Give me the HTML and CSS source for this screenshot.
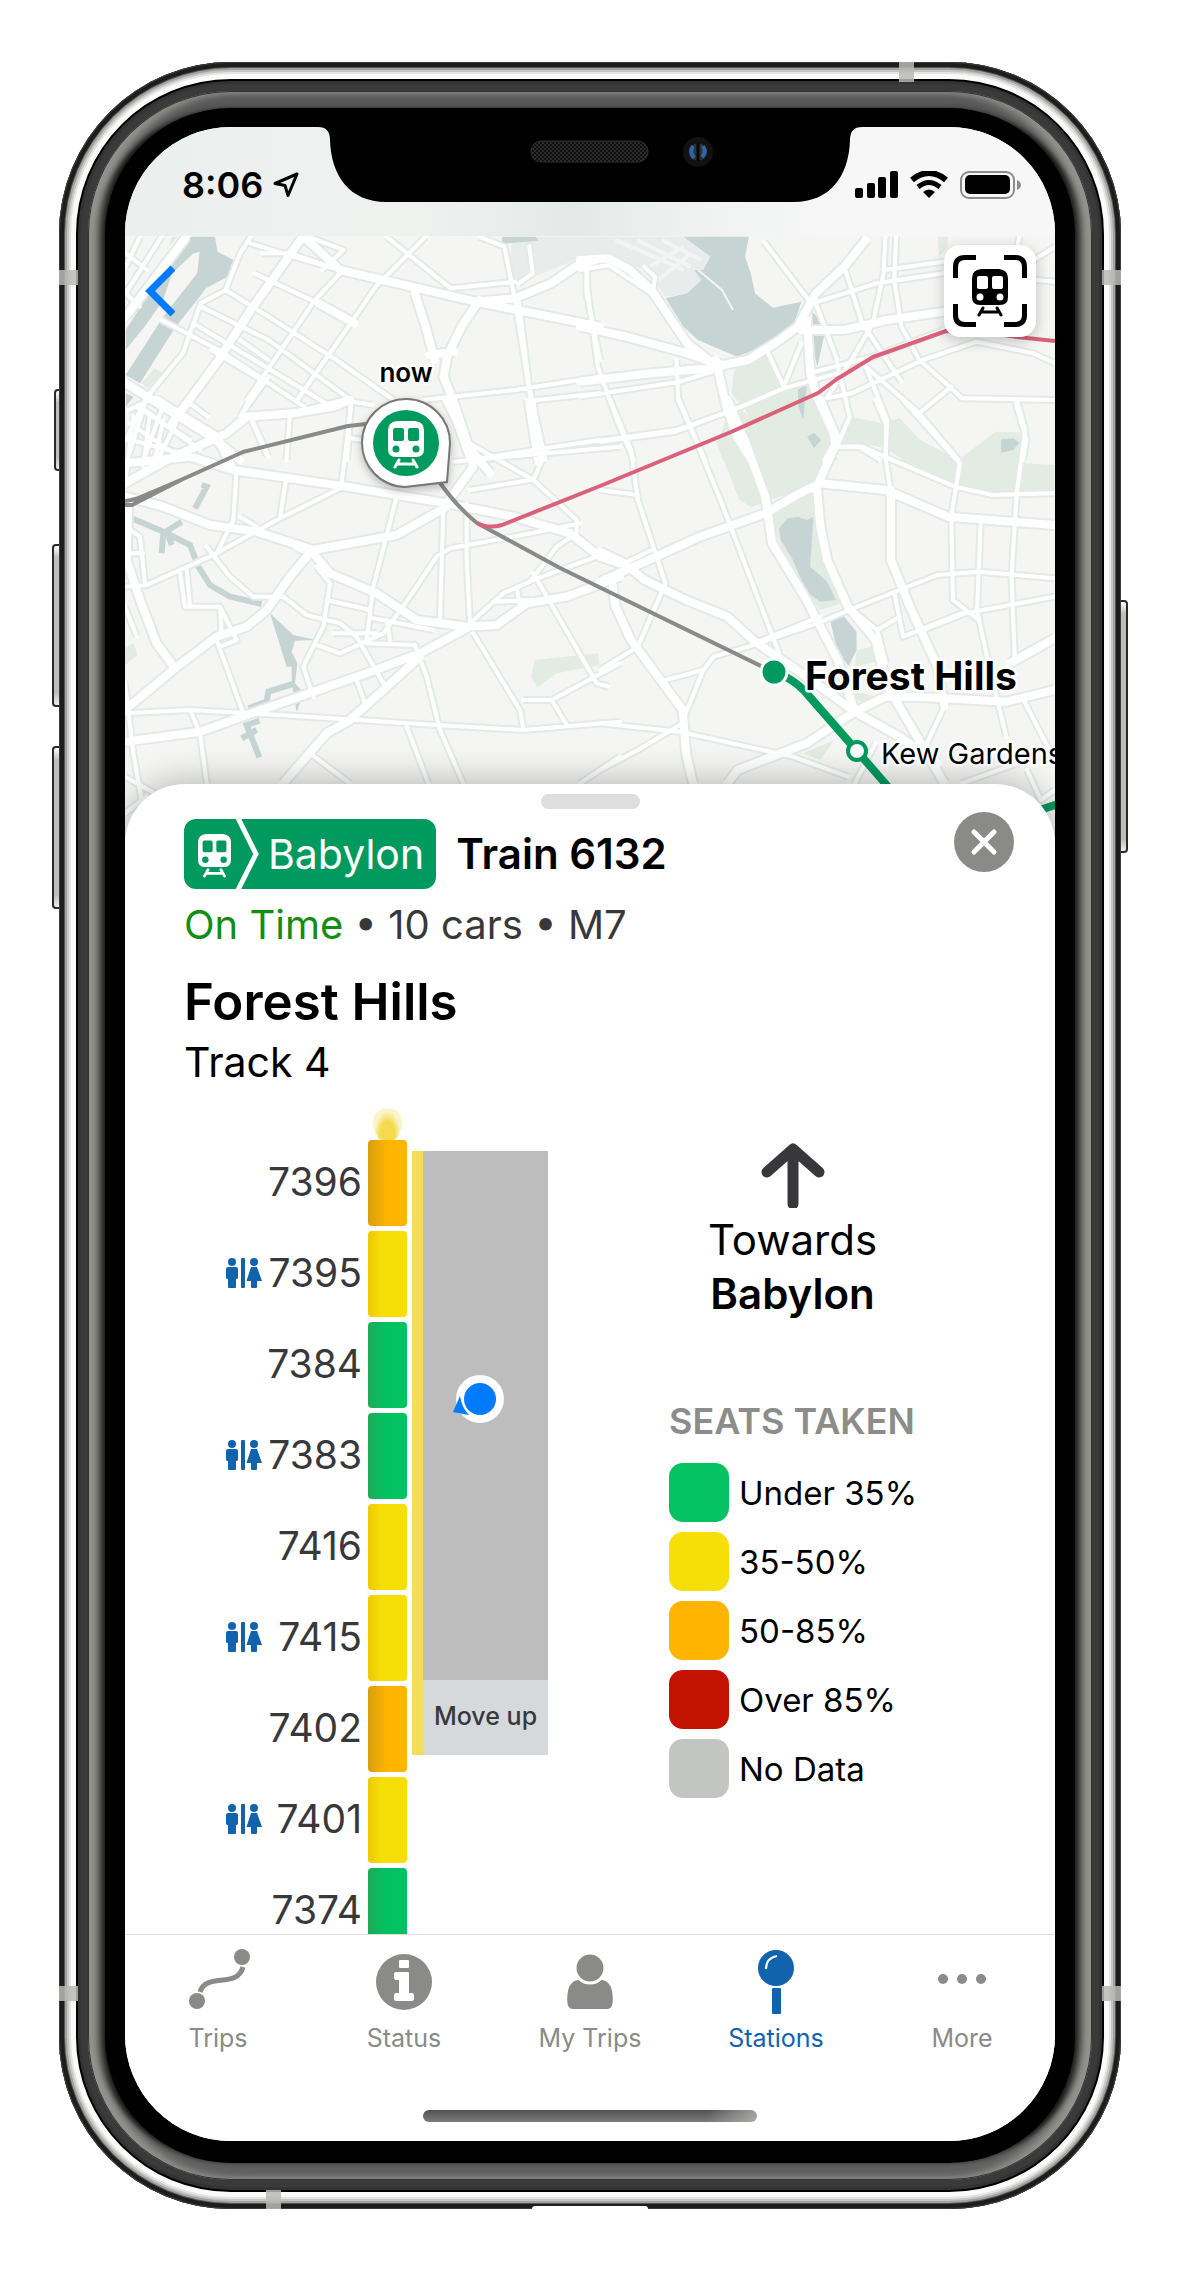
FILE: index.html
```html
<!DOCTYPE html>
<html lang="en">
<head>
<meta charset="utf-8">
<meta name="viewport" content="width=device-width, initial-scale=1">
<title>Train 6132 to Babylon</title>
<link rel="stylesheet" href="styles.css">
</head>
<body>
<svg class="sprite" aria-hidden="true">
  <symbol id="train" viewBox="0 0 36 48">
    <path fill="currentColor" fill-rule="evenodd" d="M9 0H27Q36 1 36 9V28Q36 36 28 36H8Q0 36 0 28V9Q0 1 9 0ZM7 7Q5 7 5 9V18Q5 20 7 20H14Q16 20 16 18V9Q16 7 14 7ZM22 7Q20 7 20 9V18Q20 20 22 20H29Q31 20 31 18V9Q31 7 29 7ZM8 24.500A3.500 3.500 0 1 0 8 31.500A3.500 3.500 0 1 0 8 24.500ZM28 24.500A3.500 3.500 0 1 0 28 31.500A3.500 3.500 0 1 0 28 24.500Z"/>
    <path fill="none" stroke="currentColor" stroke-width="3" stroke-linecap="round" d="M11 39L7 46M25 39L29 46M10 43H26"/>
  </symbol>
  <symbol id="restroom" viewBox="0 0 36 30">
    <g fill="currentColor">
      <circle cx="6" cy="4" r="4"/>
      <path d="M2 9H10Q12 9 12 11V20Q12 21 10 21V29Q10 30 9 30H3Q2 30 2 29V21Q0 21 0 20V11Q0 9 2 9Z"/>
      <rect x="15" y="0" width="4" height="30" rx="1"/>
      <circle cx="28" cy="4" r="4"/>
      <path d="M25 9H31L36 23H31V29Q31 30 30 30H26Q25 30 25 29V23H20.500Z"/>
    </g>
  </symbol>
</svg>

<main class="stage">
<div class="phone">
  <span class="side-key side-key-mute"></span>
  <span class="side-key side-key-up"></span>
  <span class="side-key side-key-down"></span>
  <span class="side-key side-key-power"></span>
  <div class="case">
  <span class="band band-left"></span>
  <span class="band band-right"></span>
  <span class="band band-left band-low"></span>
  <span class="band band-right band-low"></span>
  <span class="band band-top"></span>
  <span class="band band-bottom"></span>
  <span class="chin"></span>
  <div class="rim">
  <div class="glass">
  <div class="screen">

    <header class="status">
      <div class="clock">
        <time>8:06</time>
        <svg width="26" height="26" viewBox="0 0 26 26" aria-hidden="true"><path d="M2 11.500L24 2L15 23.500L12 13.500Z" fill="none" stroke="#000" stroke-width="3" stroke-linejoin="round"/></svg>
      </div>
      <svg class="notch" viewBox="314 126 552 78" aria-hidden="true">
        <defs><pattern id="mesh" width="4" height="4" patternUnits="userSpaceOnUse"><rect width="4" height="4" fill="#101010"/><circle cx="1" cy="1" r="1" fill="#333"/><circle cx="3" cy="3" r="1" fill="#333"/></pattern></defs>
        <path d="M314 126V127H318Q330 127 330 140C331 176 350 202 386 202H794C830 202 849 176 850 140Q850 127 862 127H866V126Z"/>
        <rect x="531" y="141" width="117" height="21" rx="10" fill="url(#mesh)" stroke="#2c2c2c"/>
        <circle cx="698" cy="152" r="15" fill="#121212"/>
        <circle cx="698" cy="152" r="9" fill="#2c3138"/>
        <path d="M693 146Q689 152 694 158M703 146Q707 152 702 157" fill="none" stroke="#2a66a8" stroke-width="4"/>
        <path d="M698 143V161" stroke="#050505" stroke-width="3"/>
      </svg>
      <svg class="signals" width="167" height="28" viewBox="854 171 167 28" role="img" aria-label="Signal, Wi-Fi and battery">
        <rect x="854" y="188" width="8" height="10" rx="2"/><rect x="866" y="183" width="8" height="15" rx="2"/><rect x="877" y="177" width="8" height="21" rx="2"/><rect x="889" y="171" width="8" height="27" rx="2"/>
        <path d="M911 180Q928 166 945 180" fill="none" stroke="#000" stroke-width="6"/>
        <path d="M917 187Q928 178 939 187" fill="none" stroke="#000" stroke-width="5"/>
        <path d="M922 192Q928 187 934 192L928 198Z"/>
        <rect x="960" y="172" width="53" height="26" rx="8" fill="none" stroke="#8c8c8c" stroke-width="2"/>
        <rect x="964" y="175" width="45" height="19" rx="5"/>
        <path d="M1016 180Q1020 182 1020 185Q1020 188 1016 190Z" fill="#8c8c8c"/>
      </svg>
    </header>

    <section class="map" aria-label="Map">
      <svg class="map-art" viewBox="125 236 930 614" preserveAspectRatio="xMidYMin slice">
        <defs>
          <g id="streets">
            <g transform="translate(40 40) scale(.35714 .33333)">
              <path d="M590 590L560 640L520 750L450 790L400 940L300 1070L240 1200M620 640H700L840 690M590 610L740 660L840 690M840 700L770 780L580 1080M940 740L870 850L720 1080M340 840L500 930L740 1100M430 850L600 960L800 1090M450 800L640 900L870 1080M600 700L780 790M640 830L830 960L990 1080M520 750L640 830M750 590L850 630L790 690M970 590L1150 745L1330 725M940 740L1080 590M1230 590L1300 620L1330 780L1400 1260M1340 780L1370 1040L1415 1260M1370 620L1380 700L1340 730M1530 680V760L1568 960M560 1130L700 1120L850 1080L930 1095M1070 1080L1330 1050L1568 1010M1390 1080L1568 1060M1200 1260L1568 1200M700 1120L690 1260M870 1090L860 1260M590 1130L640 1250M240 640L300 690M240 760L280 800M280 590L240 680M340 590L240 760M420 1090L470 1130M560 900L640 960M480 930L620 1020L560 1130M300 1070L250 1240M340 1110L290 1260M380 1150L330 1260M270 1100L420 1200M250 1150L390 1250M640 1010L560 1130"/>
            </g>
            <g transform="translate(580 40) scale(.35714 .33333)">
              <path d="M20 680V740L50 980L100 1130L150 1260M270 960L275 1080L350 1260M0 690L80 675L200 760L300 920M515 605L640 780M650 790L830 730L1018 700M855 590L850 700L820 850L760 960L690 1075M885 590L880 720L900 860L950 960L1040 1045L1070 1075L1331 1080M850 690L1018 665M740 680L790 850L900 1025M660 790L720 960M690 1075L760 1060L960 960L1110 905L1270 940L1331 970M640 1000L820 950L1018 870M525 935L570 1040L620 910M0 1070L280 1025L400 985M0 1210L270 1170L430 1110L570 1045L720 1000M800 980L860 1140L855 1260M800 980L950 1120L1060 1260M950 1120L1040 1040M720 970L755 1130L720 1220L780 1220L840 1260M1220 1090L1250 1200L1240 1260M1270 660L1331 620M1230 590L1225 620M1275 720L1331 725M180 680L210 710L205 750"/>
            </g>
            <g transform="translate(100 400) scale(.33333)">
              <path d="M100 50L75 250M150 40L130 200M190 60L160 200M75 115L280 170M120 20L300 150M85 30L150 0M410 210L400 360L350 460M75 560L140 555L340 465L540 355L720 265M420 350L470 380M890 290L820 560L800 720M540 350L560 230M320 440L390 530L460 590L550 590L620 645L720 670L770 710L850 850M240 520L255 620L360 620L410 720L360 740M260 510L270 620M360 620L365 700M350 720L430 940M75 380L120 410L135 550M90 460H130M75 620L110 710M75 850L100 1060L125 1200M75 1130L200 1200M75 940L270 930L540 945L1010 975L1270 990L1560 965M270 930L300 1000L320 1150M75 1240L140 1190M650 500L690 550L670 680L610 800L640 890M680 600L810 630M650 735L720 760L850 700L930 590L1010 470L1050 445L1240 410L1440 370M1030 320L1020 660M1100 310V480L1110 670M820 655L1000 690M800 730L945 735L980 830L1020 990L1090 1150M770 840L795 910M920 980L985 1150M630 1060L750 1150M1120 700L1260 930L1270 990M1110 670L1210 580L1290 545L1370 440L1430 400M1180 605L1290 600M1300 520L1490 850L1525 860M1270 900H1355L1560 790M1355 900L1400 975M1440 1150L1560 1070M755 0L725 250M750 115L790 120M1060 185L1560 140M1100 125L1300 240L1430 360V390M1300 240L1340 150M1110 270L1290 240M1280 0L1310 190M1300 0L1320 150M1530 0L1560 70M450 50L500 165M1490 470L1300 540M700 700H830M860 660L870 720M1250 560L1260 620"/>
            </g>
            <g transform="translate(600 400) scale(.34436 .33333)">
              <path d="M0 125L220 95L420 15M30 0L90 150L110 300L190 550L110 740L0 810M230 0L290 150L350 300L520 760M0 270L110 285M70 490L150 450M190 840L300 810L330 770L430 740L630 670L760 615L980 525L1100 515L1320 535M300 810L245 950M460 725L640 650M0 970L230 995L560 1070L720 1130M0 1110L110 1050L240 970M690 140H760L860 185L1030 260L1140 285L1320 280M800 0L830 70V180L845 280M880 0L1045 190L1020 350L1025 600L1100 660M1210 0L1235 90L1210 280L1195 530L1205 790M1105 375L1095 630L1130 800L1180 1010M940 690L1060 640L1320 590M855 580L880 710L1050 640M870 650L805 690L830 790M720 620L805 690M1000 920L940 1050M1230 900L1320 1080M1240 1110L1280 1200L1321 1170M1050 1150L1240 1080M740 1150L800 1030"/>
            </g>
          </g>
          <g id="avenues">
            <g transform="translate(40 40) scale(.35714 .33333)">
              <path d="M738 590L840 690L1060 745L1220 785L1330 775L1430 730L1500 680L1568 655M1220 785L1568 860M1230 780L1180 860L1140 950L1130 1010L1160 1090L1200 1220L1260 1300M1050 760L1080 860L1105 960M1090 945L1160 935M240 1030L330 1090L480 1190L560 1260M735 590L690 660L590 810L500 960L370 1150M410 590L240 830M780 790L880 850"/>
            </g>
            <g transform="translate(580 40) scale(.35714 .33333)">
              <path d="M0 660L80 655L140 690L200 750L250 830L300 910L360 960L400 975L470 960L560 900L610 860L660 760L740 680L800 600M0 860L130 890L300 940L380 970M0 1025L200 1000L370 985M380 960L410 1100L440 1190L480 1260M635 840L645 1000L660 1060L710 1180L715 1215L690 1260M620 870H740L860 840L1020 815"/>
            </g>
            <g transform="translate(100 400) scale(.33333)">
              <path d="M75 250L200 180L380 100L440 50L580 40L700 20L750 0M170 0L250 50L350 110L400 210L740 260L1040 310L1240 350L1410 400L1500 470L1560 490M75 290L190 320L330 375L470 395L640 450L890 405L1040 320M75 190L270 170L400 210M590 440L640 460L690 520L830 580L950 660L1100 680L1190 675L1280 610L1400 590L1560 530M620 470L570 530L500 630L440 680L350 710L225 805L75 930M85 300L80 480L120 600L170 730L225 805M75 1025L300 995L440 945L800 820L960 760L1100 685M960 770L750 960L680 1000L550 1150M1040 310L1120 200L1070 60L1040 0"/>
            </g>
            <g transform="translate(600 400) scale(.34436 .33333)">
              <path d="M0 455L70 490L130 540L250 600L370 650L450 725L600 830L740 935L870 1010L980 1090M0 545L120 490L290 410L480 340L580 280L640 250L830 270L1010 350L1320 375M370 0L420 120L480 290L500 430L600 600L690 780L740 935M640 0L690 120L630 260L640 380L660 480L720 620L800 720L830 850L960 1080L1000 1150M845 270V480L900 620L980 800L1000 920M740 935L830 890H920L1180 905L1320 870M740 935L600 1030L400 1110L370 1150M35 540L45 620L90 720L240 930L250 1060L270 1150M1190 790L1320 715"/>
            </g>
          </g>
        </defs>
        <rect x="125" y="236" width="930" height="614" fill="#f5f5f4"/>
        <g class="park">
          <g transform="translate(40 40) scale(.35714 .33333)"><path d="M320 985L345 1000L300 1045L285 1030ZM370 590H385L360 620Z"/></g>
          <g transform="translate(580 40) scale(.35714 .33333)"><path d="M430 1000L470 930L525 950L560 1040L640 1020L670 1060L720 1190V1260H400L380 1200L440 1190L470 1120L425 1060ZM1002 590H1030V620L1005 650Z"/></g>
          <g transform="translate(600 400) scale(.34436 .33333)"><path d="M385 10L430 45L640 0L700 130L630 260L520 290L440 322L405 300L340 130ZM490 340L620 270L650 480L700 610L640 630L560 520L510 400ZM690 130L730 50L820 70L870 55L930 120L1040 180L1150 95L1230 98L1235 190L1320 195V270L1140 280L1010 245L880 180L830 145L750 130ZM745 750L790 740L820 780L740 800ZM700 860L800 890L770 915ZM590 1060L680 1020L640 1080Z"/></g>
          <g transform="translate(100 400) scale(.33333)"><path d="M1305 780L1495 760L1498 795L1370 820L1312 862L1293 830ZM75 745L100 728L113 765L75 795Z"/></g>
        </g>
        <g class="land" transform="translate(580 40) scale(.35714 .33333)">
          <path fill="#e8edec" d="M-190 590H290L365 650L340 720L300 760L240 770L180 690L80 650L0 655L-200 740Z"/>
          <path fill="none" stroke="#f3f5f4" stroke-width="4" d="M100 600L290 690M160 600L310 680M230 600L340 660M180 690L290 620M220 720L310 640"/>
        </g>
        <g class="water">
          <g transform="translate(40 40) scale(.35714 .33333)"><path d="M413 590H490L497 635L542 660L525 710L465 745L440 780L380 860L280 1030L240 1005L345 830L385 775L440 700L447 635L430 640L370 700L345 780L300 850L240 930V870L330 720ZM1295 590H1388L1396 602L1290 612ZM240 1060L262 1070L240 1100Z"/></g>
          <g transform="translate(580 40) scale(.35714 .33333)"><path d="M290 590H473L462 650L478 700L490 760L540 803L620 785L600 850L540 905L440 950L330 900L290 860L240 775L300 760L340 720L320 690L345 690L365 650ZM650 815L672 840L685 880L665 980L655 940ZM610 1050L635 1030L625 1140L612 1100ZM636 1190L655 1178L675 1200L655 1225Z"/></g>
          <g transform="translate(600 400) scale(.34436 .33333)"><path d="M520 385L545 355L575 350L600 360L620 350L610 500L660 545L685 600L640 605L600 575L560 480L525 420ZM668 660L705 645L745 695V750L722 798L690 755ZM1165 118L1200 115L1218 128L1200 150L1165 158Z"/></g>
          <g transform="translate(100 400) scale(.33333)"><path d="M510 640L580 705L650 720L585 722L575 755L592 790L585 850L612 880L590 935L575 850V800L560 800Z"/>
          <path class="canal" d="M95 355L190 395L270 435L295 500L330 555L390 590L485 612M185 460L190 400L245 365M215 435L205 405M285 325L320 260L305 255M585 850L505 875L500 905L445 925M478 962L440 975L478 1072M425 1015L470 990"/></g>
        </g>
        <path d="M698 270L722 290L733 310" class="line" stroke="#f5f5f4" stroke-width="2"/>
        <use href="#streets" class="street-edge"/><use href="#avenues" class="avenue-edge"/>
        <use href="#streets" class="street"/><use href="#avenues" class="avenue"/>
        <path class="line" stroke="#8a8a8a" stroke-width="4" d="M125 501Q135 500 143 496L183 479L243 452L348 426L366 424M125 505H132L183 479M438 480Q456 506 477 523L560 568L765 668"/>
        <path class="line" stroke="#d9627a" stroke-width="4" d="M477 523Q488 529 502 525L600 486L731 432L818 393L837 379L873 357L946 331L985 332L1017 337L1055 341"/>
        <path class="line" stroke="#009a5e" stroke-width="8" d="M786 677Q799 684 808 695L857 751L890 789M1040 810L1058 804"/>
        <circle cx="774" cy="672" r="13" fill="#009a5e" stroke="#fff" stroke-width="3"/>
        <circle cx="857" cy="751" r="9" fill="#fff" stroke="#009a5e" stroke-width="4"/>
        <path class="pin" d="M450 443L447 482L405 487A44 44 0 1 1 450 443Z"/>
        <circle cx="406" cy="443" r="33" fill="#009a5e"/>
        <use href="#train" x="388" y="421" width="36" height="48" color="#fff"/>
        <text class="label label-now" x="406" y="382">now</text>
        <text class="label label-stop" x="805" y="690">Forest Hills</text>
        <text class="label label-minor" x="881" y="764">Kew Gardens</text>
      </svg>
      <button class="back" type="button" aria-label="Back">
        <svg width="30" height="52" viewBox="0 0 30 52"><path d="M28 3L5 26L28 49" fill="none" stroke="#007aff" stroke-width="7"/></svg>
      </button>
      <button class="scan" type="button" aria-label="Find my train">
        <svg width="74" height="72" viewBox="0 0 74 72"><path d="M2.500 23V12Q2.500 2.500 12 2.500H23M51 2.500H62Q71.500 2.500 71.500 12V23M71.500 49V60Q71.500 69.500 62 69.500H51M23 69.500H12Q2.500 69.500 2.500 60V49" fill="none" stroke="#000" stroke-width="5"/><use href="#train" x="19" y="14" width="36" height="48"/></svg>
      </button>
    </section>

    <section class="sheet">
      <div class="grabber"></div>
      <button class="close" type="button" aria-label="Close">
        <svg width="60" height="60" viewBox="0 0 60 60"><path d="M20 20L40 40M40 20L20 40" stroke="#fff" stroke-width="5" stroke-linecap="round"/></svg>
      </button>
      <div class="title-row">
        <div class="badge">
          <svg class="badge-train" width="33" height="44"><use href="#train" width="33" height="44"/></svg>
          <svg class="badge-arrow" width="24" height="70" viewBox="0 0 24 70"><path d="M1 -3L20 35L1 73" fill="none" stroke="#fff" stroke-width="5"/></svg>
          <span>Babylon</span>
        </div>
        <h1 class="train-name">Train 6132</h1>
      </div>
      <p class="facts"><span class="on-time">On Time</span> • 10 cars • M7</p>
      <h2 class="station">Forest Hills</h2>
      <p class="track">Track 4</p>

      <div class="board">
        <ol class="cars">
          <li class="car"><span class="car-number">7396</span><i class="block block-orange block-lead"></i></li>
          <li class="car"><svg class="wc" role="img" aria-label="Restroom"><use href="#restroom"/></svg><span class="car-number">7395</span><i class="block block-yellow"></i></li>
          <li class="car"><span class="car-number">7384</span><i class="block block-green"></i></li>
          <li class="car"><svg class="wc" role="img" aria-label="Restroom"><use href="#restroom"/></svg><span class="car-number">7383</span><i class="block block-green"></i></li>
          <li class="car"><span class="car-number">7416</span><i class="block block-yellow"></i></li>
          <li class="car"><svg class="wc" role="img" aria-label="Restroom"><use href="#restroom"/></svg><span class="car-number">7415</span><i class="block block-yellow"></i></li>
          <li class="car"><span class="car-number">7402</span><i class="block block-orange"></i></li>
          <li class="car"><svg class="wc" role="img" aria-label="Restroom"><use href="#restroom"/></svg><span class="car-number">7401</span><i class="block block-yellow"></i></li>
          <li class="car"><span class="car-number">7374</span><i class="block block-green"></i></li>
        </ol>
        <div class="platform">
          <div class="platform-main">
            <svg class="you" width="56" height="56" viewBox="0 0 56 56" role="img" aria-label="Your location"><circle cx="30" cy="26" r="24" fill="#fff"/><path d="M3 39L10 23Q12 35 19 42Z" fill="#007aff"/><circle cx="30" cy="26" r="16" fill="#007aff"/></svg>
          </div>
          <div class="move-up">Move up</div>
        </div>
        <aside class="legend">
          <svg class="heading-arrow" width="64" height="66" viewBox="0 0 64 66" aria-hidden="true"><path d="M6 30L32 7L58 30M32 8V62" fill="none" stroke="#38383a" stroke-width="11" stroke-linecap="round" stroke-linejoin="round"/></svg>
          <p class="towards">Towards<br><b>Babylon</b></p>
          <h3 class="legend-title">SEATS TAKEN</h3>
          <ul class="scale">
            <li><i class="swatch green"></i>Under 35%</li>
            <li><i class="swatch yellow"></i>35-50%</li>
            <li><i class="swatch orange"></i>50-85%</li>
            <li><i class="swatch red"></i>Over 85%</li>
            <li><i class="swatch gray"></i>No Data</li>
          </ul>
        </aside>
      </div>
    </section>

    <footer class="dock">
      <nav class="tabs">
        <a class="tab" href="#trips"><svg width="72" height="72" viewBox="0 0 72 72"><circle cx="60" cy="10" r="8"/><circle cx="15" cy="54" r="8"/><path d="M18 45C24 25 55 42 61 20" fill="none" stroke="currentColor" stroke-width="5"/></svg>Trips</a>
        <a class="tab" href="#status"><svg width="72" height="72" viewBox="0 0 72 72"><circle cx="36" cy="35" r="28"/><path fill="#fff" d="M32 13H40Q41 13 41 14V20Q41 21 40 21H32Q31 21 31 20V14Q31 13 32 13ZM28 25H40Q41 25 41 26V46H44Q46 46 46 48V52Q46 54 44 54H28Q26 54 26 52V48Q26 46 28 46H31V33H28Q26 33 26 31V27Q26 25 28 25Z"/></svg>Status</a>
        <a class="tab" href="#my-trips"><svg width="72" height="72" viewBox="0 0 72 72"><path d="M24 33H48Q56 34 58 44Q61 62 53 62H19Q11 62 14 44Q16 34 24 33Z"/><circle cx="36" cy="21" r="15" stroke="#fff" stroke-width="3"/></svg>My Trips</a>
        <a class="tab tab-active" href="#stations" aria-current="page"><svg width="72" height="72" viewBox="0 0 72 72"><circle cx="36" cy="21" r="18"/><rect x="32" y="41" width="9" height="26" rx="1"/><path d="M26 22Q26 11 37 9" fill="none" stroke="#fff" stroke-width="2"/></svg>Stations</a>
        <a class="tab" href="#more"><svg width="72" height="72" viewBox="0 0 72 72"><circle cx="17" cy="32" r="5"/><circle cx="36" cy="32" r="5"/><circle cx="55" cy="32" r="5"/></svg>More</a>
      </nav>
      <div class="home-bar"></div>
    </footer>

  </div>
  </div>
  </div>
  </div>
</div>
</main>
</body>
</html>
```
FILE: styles.css
```css
* { box-sizing: border-box; }

body {
  margin: 0;
  background: #fff;
  color: #000;
  font-family: Inter, "Liberation Sans", sans-serif;
}

h1, h2, h3, p, ol, ul { margin: 0; padding: 0; list-style: none; }
button { border: 0; padding: 0; font: inherit; cursor: pointer; }
svg { display: block; }
.sprite { position: absolute; width: 0; height: 0; }

.stage { padding: 62px 59px 61px; }
.phone { position: relative; min-width: 900px; }

/* Case: steel frame, rubber gasket, curved glass edge */
.case {
  position: relative;
  padding: 29px;
  border-radius: 172px;
  background: #3a3a3a;
  overflow: hidden;
  box-shadow:
    inset 0 0 0 1px #3c3c3c,
    inset 0 0 0 5px #1d1d1d,
    inset 0 0 0 6px #555,
    inset 0 0 0 8px #a2a2a0,
    inset 0 0 0 10px #c6c6c4,
    inset 0 0 0 12px #e4e4e2,
    inset 0 0 0 17px #fafafa,
    inset 0 0 0 19px #000,
    inset 0 0 0 22px #333;
}

.rim {
  padding: 17px;
  border-radius: 143px;
  background: #111;
  box-shadow:
    inset 0 0 0 1px #333,
    inset 12px 0 8px #93938f,
    inset -12px 0 8px #93938f,
    inset 0 18px 5px #585858,
    inset 0 -18px 5px #606060;
}

.glass { padding: 19px 20px 22px; border-radius: 126px; background: #000; }

.side-key {
  position: absolute;
  width: 12px;
  border-radius: 4px;
  border: 2px solid #2a2a2a;
  background: linear-gradient(#fff, #bdbdbb 12px, #bdbdbb calc(100% - 12px), #eee);
}
.side-key-mute { left: -5px; top: 327px; height: 82px; }
.side-key-up { left: -7px; top: 482px; height: 163px; }
.side-key-down { left: -7px; top: 684px; height: 163px; }
.side-key-power { right: -7px; top: 538px; height: 253px; }

.band { position: absolute; background: #b9b9b6; opacity: .85; }
.band-left, .band-right { top: 208px; width: 19px; height: 15px; }
.band-left { left: 0; }
.band-right { right: 0; }
.band-low { top: auto; bottom: 208px; }
.band-top { top: 0; right: 207px; width: 15px; height: 20px; }
.band-bottom { bottom: 0; left: 207px; width: 15px; height: 19px; }
.chin { position: absolute; bottom: 0; left: calc(50% - 58px); width: 116px; height: 3px; border-radius: 8px 8px 0 0; background: #fff; }

.screen { position: relative; border-radius: 106px; background: #fff; overflow: hidden; }

/* Status bar */
.status {
  position: relative;
  display: flex;
  justify-content: space-between;
  align-items: center;
  height: 109px;
  padding: 7px 33px 0 57px;
  background: linear-gradient(90deg, #ebefee, #f0f2f0 30%, #e4e9e8 48%, #eff2f1 62%, #f6f7f6 75%);
}
.clock { display: flex; align-items: center; gap: 10px; font-size: 36px; font-weight: 600; line-height: 44px; }
.notch { position: absolute; top: -1px; left: 50%; width: 552px; margin-left: -276px; }

/* Map */
.map { position: relative; }
.map-art { width: 100%; height: 614px; }
.map-art path { vector-effect: non-scaling-stroke; }
.park { fill: #e2ece2; }
.water { fill: #c6d4d4; }
.canal { fill: none; stroke: #c6d4d4; stroke-width: 6; }
.street-edge, .avenue-edge, .street, .avenue, .line { fill: none; stroke-linejoin: round; }
.street-edge { stroke: #e4eae8; stroke-width: 8; }
.avenue-edge { stroke: #e4eae8; stroke-width: 12; }
.street { stroke: #fff; stroke-width: 4; stroke-linecap: round; }
.avenue { stroke: #fff; stroke-width: 8; stroke-linecap: round; }
.pin { fill: #fff; stroke: #777; stroke-width: 2; filter: drop-shadow(0 3px 4px rgba(0, 0, 0, .25)); }
.label { paint-order: stroke; stroke: #fff; stroke-width: 5px; stroke-linejoin: round; }
.label-now { font-size: 26px; font-weight: 600; text-anchor: middle; }
.label-stop { font-size: 39px; font-weight: 700; }
.label-minor { font-size: 29px; }

.back { position: absolute; top: 29px; left: 20px; background: none; }
.scan {
  position: absolute;
  top: 9px;
  right: 19px;
  display: grid;
  place-items: center;
  width: 92px;
  height: 92px;
  border-radius: 16px;
  background: #fff;
  color: #000;
  box-shadow: 0 4px 14px rgba(0, 0, 0, .22);
}

/* Sheet */
.sheet {
  position: relative;
  margin-top: -66px;
  padding: 10px 59px 0;
  border-radius: 60px 60px 0 0;
  background: #fff;
  box-shadow: 0 0 36px rgba(0, 0, 0, .3);
}
.grabber { width: 99px; height: 15px; margin: 0 auto 10px; border-radius: 8px; background: #dedede; }
.close { position: absolute; top: 28px; right: 41px; border-radius: 50%; background: #8a8a88; }
.title-row { display: flex; align-items: center; gap: 20px; height: 70px; }
.badge {
  display: flex;
  align-items: center;
  height: 70px;
  padding: 0 12px 0 14px;
  border-radius: 12px;
  background: #009a5e;
  color: #fff;
  font-size: 41px;
}
.badge-train { margin-top: 4px; }
.badge-arrow { margin: 0 8px 0 5px; }
.train-name { font-size: 42px; font-weight: 600; line-height: 48px; }
.facts { margin-top: 12px; color: #38383a; font-size: 40px; line-height: 48px; }
.on-time { color: #138d13; }
.station { margin-top: 21px; font-size: 51px; font-weight: 600; line-height: 64px; }
.track { margin-top: 4px; font-size: 41px; line-height: 48px; }

/* Train diagram: a window onto a longer list */
.board {
  display: grid;
  grid-template-columns: 223px 136px 250px;
  column-gap: 5px;
  height: 848px;
  padding-top: 54px;
  overflow: hidden;
}
.cars { display: flex; flex-direction: column; gap: 5px; }
.car { display: flex; align-items: center; justify-content: flex-end; flex: none; height: 86px; padding-left: 42px; color: #38383a; font-size: 39px; }
.wc { width: 36px; height: 30px; margin: 0 auto 3px 0; color: #1263ae; }
.car-number { margin-right: 6px; padding-bottom: 3px; }
.block { position: relative; width: 39px; height: 86px; border-radius: 4px; }
.green, .block-green { background: #04c262; }
.yellow, .block-yellow { background: #f5df06; }
.orange, .block-orange { background: #ffb400; }
.red { background: #c41200; }
.gray { background: #c3c5c3; }
.block { background-image: linear-gradient(90deg, rgba(100, 100, 60, .25), transparent 50%); }
.block-yellow { background-image: linear-gradient(90deg, rgba(220, 150, 0, .3), transparent 35%); }
.block-lead::before {
  content: "";
  position: absolute;
  left: 5px;
  bottom: 86px;
  width: 29px;
  height: 32px;
  border-radius: 14px 14px 10px 10px;
  background: radial-gradient(ellipse 13px 22px at 50% 80%, #f5da4e 55%, rgba(245, 218, 78, .3) 100%);
  clip-path: polygon(0 0, 100% 0, 100% 60%, 80% 100%, 20% 100%, 0 60%);
}

.platform { margin-top: 11px; border-left: 11px solid #f6dc55; height: 604px; display: flex; flex-direction: column; color: #38383a; }
.platform-main { position: relative; flex: 1; background: #bdbdbd; }
.you { position: absolute; left: 27px; top: 222px; }
.move-up { display: grid; place-items: center; height: 75px; padding-bottom: 3px; background: #d5d9dc; font-size: 25px; font-weight: 500; }

.legend { padding-top: 2px; margin-left: 116px; width: 247px; }
.heading-arrow { margin: 0 auto 5px; }
.towards { font-size: 42px; line-height: 54px; text-align: center; }
.towards b { font-weight: 600; }
.legend-title { margin: 79px 0 21px; color: #8c8c8a; font-size: 36px; font-weight: 600; line-height: 42px; white-space: nowrap; }
.scale { display: grid; gap: 10px; font-size: 33px; }
.scale li { display: flex; align-items: center; gap: 10px; white-space: nowrap; }
.swatch { width: 60px; height: 59px; border-radius: 14px; }

/* Tab bar */
.dock { position: relative; padding-bottom: 19px; background: #fff; }
.tabs { display: grid; grid-template-columns: repeat(5, 1fr); padding-top: 12px; border-top: 1px solid #dcdcdc; }
.tab { display: flex; flex-direction: column; align-items: center; gap: 4px; color: #8a8a88; font-size: 25px; line-height: 30px; text-decoration: none; }
.tab svg { fill: currentColor; }
.tab-active { color: #1263ae; }
.home-bar { width: 36%; height: 12px; margin: 57px auto 0; border-radius: 6px; background: linear-gradient(90deg, transparent 85%, rgba(190, 190, 186, .7)), linear-gradient(#525252, #7c7c7a); }
```
